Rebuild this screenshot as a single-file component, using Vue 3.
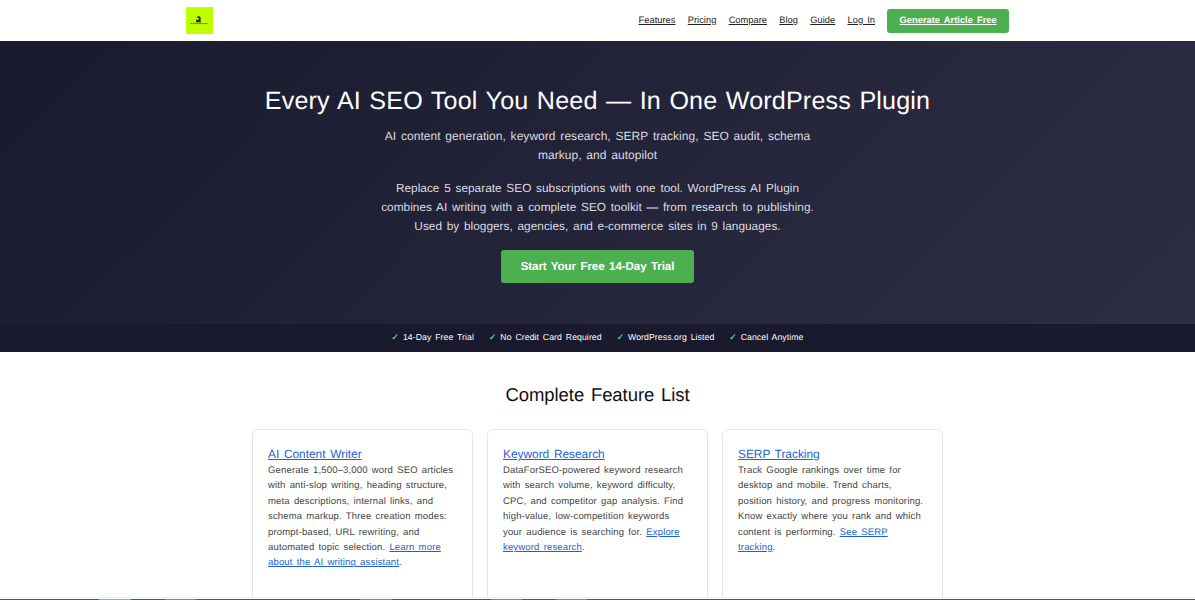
<template>
  <div class="page">
    <header class="header">
      <div class="header-inner">
        <a class="logo" aria-label="Home">
          <svg width="27" height="27" viewBox="0 0 28 28">
            <rect width="28" height="28" fill="#bfff00" />
            <path d="M11 11.2L12.2 9.7H14.2L15.2 11V16.2H13.6V15.2L12.6 16.2H11.2L10.4 15.2V13.6L13.2 12.6V11.4Z" fill="#26340a" />
            <path d="M10.4 12.5H13" stroke="#bfff00" stroke-width=".6" />
            <path d="M4.5 17.2H22.5" stroke="#5f7f08" stroke-width="1" stroke-dasharray="2.4 .3 1.6 .3" />
          </svg>
        </a>
        <nav class="nav">
          <a v-for="link in links" :key="link" href="#">{{ link }}</a>
          <a class="nav-cta" href="#">Generate Article Free</a>
        </nav>
      </div>
    </header>

    <section class="hero">
      <h1>Every AI SEO Tool You Need — In One WordPress Plugin</h1>
      <p class="lead">AI content generation, keyword research, SERP tracking, SEO audit, schema<br>markup, and autopilot</p>
      <p class="lead lead-more">Replace 5 separate SEO subscriptions with one tool. WordPress AI Plugin<br>combines AI writing with a complete SEO toolkit — from research to publishing.<br>Used by bloggers, agencies, and e-commerce sites in 9 languages.</p>
      <a class="hero-btn" href="#">Start Your Free 14-Day Trial</a>
    </section>

    <div class="trust">
      <span v-for="item in trust" :key="item"><i>✓</i>{{ item }}</span>
    </div>

    <section class="features">
      <h2>Complete Feature List</h2>
      <div class="grid">
        <article v-for="f in features" :key="f.title" class="card">
          <h3><a href="#">{{ f.title }}</a></h3>
          <p>
            <template v-for="line in f.lines" :key="line">{{ line }}<br></template>{{ f.last }} <a href="#">{{ f.link[0] }}<br>{{ f.link[1] }}</a>.
          </p>
        </article>
      </div>
    </section>
    <div class="bottom-bar"></div>
  </div>
</template>

<script setup>
const links = ['Features', 'Pricing', 'Compare', 'Blog', 'Guide', 'Log In'];

const trust = ['14-Day Free Trial', 'No Credit Card Required', 'WordPress.org Listed', 'Cancel Anytime'];

const features = [
  {
    title: 'AI Content Writer',
    lines: [
      'Generate 1,500–3,000 word SEO articles',
      'with anti-slop writing, heading structure,',
      'meta descriptions, internal links, and',
      'schema markup. Three creation modes:',
      'prompt-based, URL rewriting, and',
    ],
    last: 'automated topic selection.',
    link: ['Learn more', 'about the AI writing assistant'],
  },
  {
    title: 'Keyword Research',
    lines: [
      'DataForSEO-powered keyword research',
      'with search volume, keyword difficulty,',
      'CPC, and competitor gap analysis. Find',
      'high-value, low-competition keywords',
    ],
    last: 'your audience is searching for.',
    link: ['Explore', 'keyword research'],
  },
  {
    title: 'SERP Tracking',
    lines: [
      'Track Google rankings over time for',
      'desktop and mobile. Trend charts,',
      'position history, and progress monitoring.',
      'Know exactly where you rank and which',
    ],
    last: 'content is performing.',
    link: ['See SERP', 'tracking'],
  },
];
</script>

<style>
body {
  margin: 0;
  overflow: hidden;
}
</style>

<style scoped>
* {
  box-sizing: border-box;
}
.page {
  display: flex;
  flex-direction: column;
  height: 600px;
  overflow: hidden;
  background: #fff;
  color: #111;
  font-family: "Liberation Sans", Arial, sans-serif;
  text-rendering: geometricPrecision;
  white-space: nowrap;
}
h1, h2, h3, p {
  margin: 0;
  font-weight: 400;
}

.header {
  flex: 0 0 41px;
}
.header-inner {
  display: flex;
  align-items: center;
  justify-content: space-between;
  width: 823px;
  height: 41px;
  margin: 0 auto;
}
.logo, .logo svg {
  display: block;
}
.nav {
  display: flex;
  align-items: center;
  gap: 12.3px;
  font-size: 9.3px;
  letter-spacing: 0.02px;
  word-spacing: 1.5px;
}
.nav a {
  padding-bottom: 1px;
  color: #222;
  text-underline-offset: 1px;
}
.nav .nav-cta {
  padding: 0 12.3px 2px;
  border-radius: 3px;
  background: #4caf50;
  color: #fff;
  font-weight: 700;
  line-height: 22px;
}

.hero {
  display: flex;
  flex: 0 0 283px;
  flex-direction: column;
  align-items: center;
  padding-top: 44px;
  background: linear-gradient(135deg, #1a1a2e 0%, #2d2d44 100%);
  color: #fff;
  text-align: center;
}
h1 {
  font-size: 25.1px;
  line-height: 33px;
  letter-spacing: 0.17px;
  word-spacing: 1.3px;
}
.lead {
  margin-top: 9px;
  color: #dcdce0;
  font-size: 12px;
  line-height: 18.6px;
  letter-spacing: 0.04px;
  word-spacing: 1.4px;
}
.lead-more {
  margin-top: 15.2px;
  font-size: 11.8px;
  letter-spacing: 0.035px;
  word-spacing: 1.4px;
}
.hero-btn {
  width: 193px;
  margin-top: 15px;
  padding-top: 1px;
  border-radius: 3px;
  background: #4caf50;
  color: #fff;
  font-size: 11.6px;
  font-weight: 700;
  line-height: 32px;
  letter-spacing: -0.09px;
  word-spacing: 1.3px;
  text-decoration: none;
}

.trust {
  display: flex;
  flex: 0 0 28px;
  align-items: center;
  justify-content: center;
  gap: 15px;
  padding-bottom: 1px;
  background: #1a1a2e;
  color: #fff;
  font-size: 8.7px;
  letter-spacing: 0.08px;
  word-spacing: 1.3px;
}
.trust i {
  margin-right: 4px;
  color: #4ade80;
  font-style: normal;
  font-weight: 700;
}

.features {
  flex: 0 0 247px;
  overflow: hidden;
  border-bottom: 1px solid #fff;
  box-shadow: inset 0 -1px #f1f1f1;
}
h2 {
  margin-top: 31px;
  font-size: 18.5px;
  line-height: 24px;
  letter-spacing: -0.06px;
  word-spacing: 1.7px;
  text-align: center;
}
.grid {
  display: grid;
  grid-template-columns: repeat(3, 1fr);
  gap: 14px;
  width: 691px;
  margin: 22px auto 0;
}
.card {
  height: 180px;
  padding: 16px 15px;
  border: 1px solid #e5e5e5;
  border-radius: 6px;
}
.card a {
  color: #1a62d6;
  text-underline-offset: 1px;
}
h3 {
  font-size: 11.9px;
  line-height: 16px;
  letter-spacing: -0.01px;
  word-spacing: 1.4px;
}
.card p {
  padding-top: 1px;
  color: #444;
  font-size: 9.5px;
  line-height: 15.4px;
  letter-spacing: 0.165px;
  word-spacing: 1.3px;
}
.bottom-bar {
  flex: 0 0 1px;
  background: linear-gradient(90deg,
    #555 99px, #6cb4dc 99px 131px,
    #555 131px 165px, #888 165px 196px,
    #555 196px 360px, #888 360px 392px,
    #555 392px 491px, #888 491px 522px,
    #555 522px 556px, #888 556px 587px,
    #555 587px);
}
</style>
